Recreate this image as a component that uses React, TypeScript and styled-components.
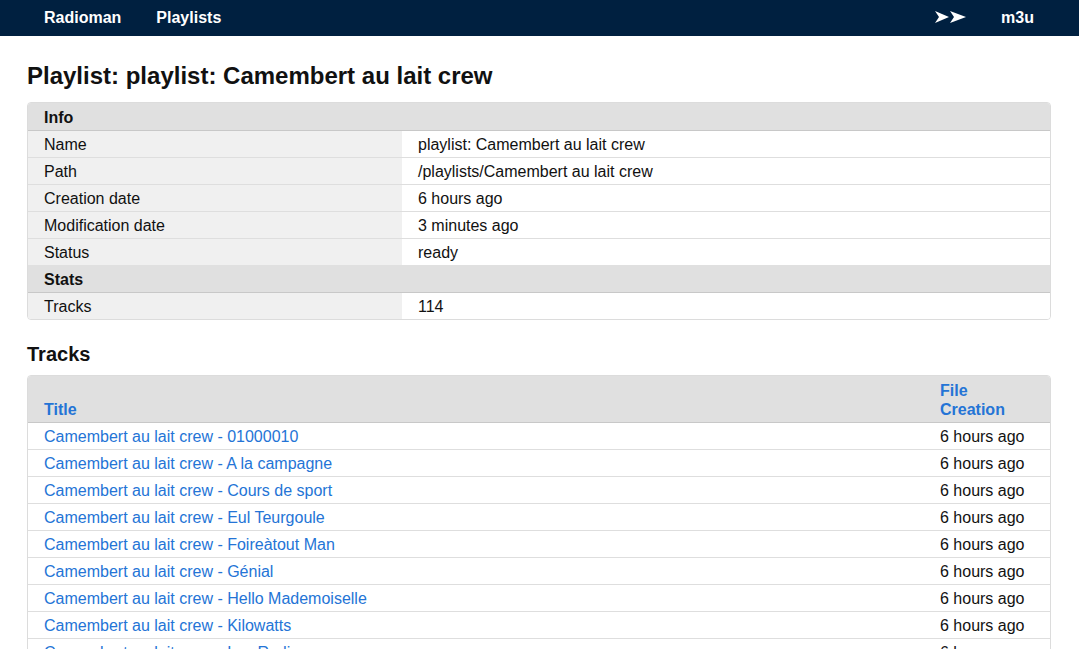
import styled, { createGlobalStyle } from 'styled-components';

const GlobalStyle = createGlobalStyle`
  html, body {
    margin: 0;
    padding: 0;
    background: #fff;
    font-family: "Liberation Sans", Arial, Helvetica, sans-serif;
    font-size: 16px;
    color: #111;
  }
  * { box-sizing: border-box; }
`;

const NavBar = styled.nav`
  height: 36px;
  background: #002040;
  display: flex;
  align-items: center;
  justify-content: space-between;
  padding: 0 45px 0 44px;
`;

const NavGroup = styled.div`
  display: flex;
  align-items: center;
  gap: 35px;
`;

const NavLink = styled.a`
  color: #fff;
  font-weight: bold;
  font-size: 16px;
  text-decoration: none;
  cursor: pointer;
`;

const Main = styled.main`
  padding: 0 28px 0 27px;
`;

const PageTitle = styled.h1`
  margin: 26px 0 12px;
  font-size: 24px;
  line-height: 28px;
  font-weight: bold;
  color: #111;
`;

const SectionTitle = styled.h2`
  margin: 22px 0 9px;
  font-size: 20px;
  line-height: 24px;
  font-weight: bold;
  color: #111;
`;

const Table = styled.table`
  width: 100%;
  border-collapse: separate;
  border-spacing: 0;
  border: 1px solid #dcdcdc;
  border-radius: 4px;
  overflow: hidden;
`;

const GroupRow = styled.tr`
  background: #e0e0e0;
`;

const GroupCell = styled.th`
  text-align: left;
  font-weight: bold;
  padding: 6px 16px 3px;
  line-height: 18px;
  border-bottom: 1px solid #c8c8c8;
`;

const Row = styled.tr<{ $last?: boolean }>`
  & > td {
    border-bottom: ${({ $last }) => ($last ? 'none' : '1px solid #dedede')};
  }
`;

const KeyCell = styled.td`
  width: 374px;
  background: #f0f0f0;
  padding: 5px 16px 3px;
  line-height: 18px;
`;

const ValueCell = styled.td`
  background: #fff;
  padding: 5px 16px 3px;
  line-height: 18px;
`;

const HeadCell = styled.th<{ $narrow?: boolean }>`
  background: #e0e0e0;
  text-align: left;
  vertical-align: bottom;
  font-weight: bold;
  padding: 5px 16px 3px;
  line-height: 19px;
  border-bottom: 1px solid #c8c8c8;
  width: ${({ $narrow }) => ($narrow ? '126px' : 'auto')};
`;

const HeadLink = styled.a`
  color: #2474d6;
  text-decoration: none;
  cursor: pointer;
`;

const TrackCell = styled.td`
  padding: 5px 16px 3px;
  line-height: 18px;
  white-space: nowrap;
`;

const TrackLink = styled.a`
  color: #2474d6;
  text-decoration: none;
  cursor: pointer;
`;

const Arrows = () => (
  <svg width="31" height="12" viewBox="0 0 31 12" aria-hidden="true">
    <path d="M0 0 L14 6 L0 12 L4 6 Z" fill="#fff" />
    <path d="M15 0 L31 6 L15 12 L19 6 Z" fill="#fff" />
  </svg>
);

const info: [string, string][] = [
  ['Name', 'playlist: Camembert au lait crew'],
  ['Path', '/playlists/Camembert au lait crew'],
  ['Creation date', '6 hours ago'],
  ['Modification date', '3 minutes ago'],
  ['Status', 'ready'],
];

const tracks = [
  '01000010',
  'A la campagne',
  'Cours de sport',
  'Eul Teurgoule',
  'Foireàtout Man',
  'Génial',
  'Hello Mademoiselle',
  'Kilowatts',
  'Les Radis',
  'Ma Mob',
];

export default function App() {
  return (
    <>
      <GlobalStyle />
      <NavBar>
        <NavGroup>
          <NavLink>Radioman</NavLink>
          <NavLink>Playlists</NavLink>
        </NavGroup>
        <NavGroup>
          <NavLink>
            <Arrows />
          </NavLink>
          <NavLink>m3u</NavLink>
        </NavGroup>
      </NavBar>
      <Main>
        <PageTitle>Playlist: playlist: Camembert au lait crew</PageTitle>
        <Table>
          <tbody>
            <GroupRow>
              <GroupCell colSpan={2}>Info</GroupCell>
            </GroupRow>
            {info.map(([k, v], i) => (
              <Row key={k} $last={i === info.length - 1}>
                <KeyCell>{k}</KeyCell>
                <ValueCell>{v}</ValueCell>
              </Row>
            ))}
            <GroupRow>
              <GroupCell colSpan={2}>Stats</GroupCell>
            </GroupRow>
            <Row $last>
              <KeyCell>Tracks</KeyCell>
              <ValueCell>114</ValueCell>
            </Row>
          </tbody>
        </Table>
        <SectionTitle>Tracks</SectionTitle>
        <Table>
          <thead>
            <tr>
              <HeadCell>
                <HeadLink>Title</HeadLink>
              </HeadCell>
              <HeadCell $narrow>
                <HeadLink>
                  File
                  <br />
                  Creation
                </HeadLink>
              </HeadCell>
            </tr>
          </thead>
          <tbody>
            {tracks.map((t, i) => (
              <Row key={t} $last={i === tracks.length - 1}>
                <TrackCell>
                  <TrackLink>Camembert au lait crew - {t}</TrackLink>
                </TrackCell>
                <TrackCell>6 hours ago</TrackCell>
              </Row>
            ))}
          </tbody>
        </Table>
      </Main>
    </>
  );
}
